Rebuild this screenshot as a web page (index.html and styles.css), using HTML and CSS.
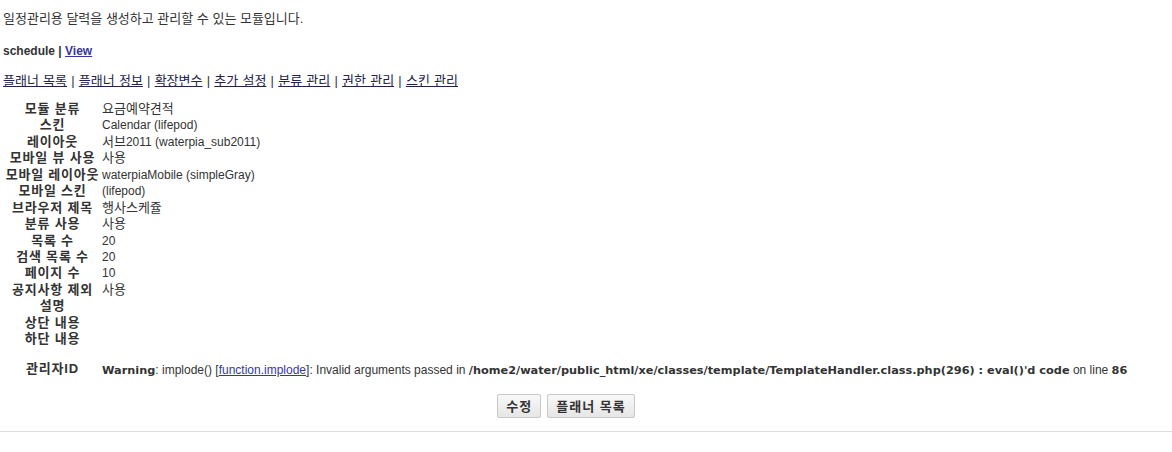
FILE: index.html
```html
<!DOCTYPE html>
<html lang="ko">
  <head>
    <meta charset="UTF-8" />
    <title>일정관리 모듈</title>
    <link rel="stylesheet" href="styles.css">
  </head>
  <body>
    <div class="content">
      <p class="intro ko">일정관리용 달력을 생성하고 관리할 수 있는 모듈입니다.</p>

      <p class="title">schedule | <a href="#">View</a></p>

      <p class="menu ko">
        <a href="#">플래너 목록</a> | <a href="#">플래너 정보</a> | <a href="#">확장변수</a> | <a href="#">추가 설정</a> | <a href="#">분류 관리</a> | <a href="#">권한 관리</a> | <a href="#">스킨 관리</a>
      </p>

      <table class="info">
        <tr><th>모듈 분류</th><td class="ko">요금예약견적</td></tr>
        <tr><th>스킨</th><td>Calendar (lifepod)</td></tr>
        <tr><th>레이아웃</th><td><span class="ko">서브</span>2011 (waterpia_sub2011)</td></tr>
        <tr><th>모바일 뷰 사용</th><td class="ko">사용</td></tr>
        <tr><th>모바일 레이아웃</th><td>waterpiaMobile (simpleGray)</td></tr>
        <tr><th>모바일 스킨</th><td>(lifepod)</td></tr>
        <tr><th>브라우저 제목</th><td class="ko">행사스케쥴</td></tr>
        <tr><th>분류 사용</th><td class="ko">사용</td></tr>
        <tr><th>목록 수</th><td>20</td></tr>
        <tr><th>검색 목록 수</th><td>20</td></tr>
        <tr><th>페이지 수</th><td>10</td></tr>
        <tr><th>공지사항 제외</th><td class="ko">사용</td></tr>
        <tr><th>설명</th><td></td></tr>
        <tr><th>상단 내용</th><td></td></tr>
        <tr><th>하단 내용</th><td></td></tr>
        <tr class="admin">
          <th>관리자ID</th>
          <td><br />
<b>Warning</b>:  implode() [<a href="#">function.implode</a>]: Invalid arguments passed in <b>/home2/water/public_html/xe/classes/template/TemplateHandler.class.php(296) : eval()'d code</b> on line <b>86</b></td>
        </tr>
      </table>

      <div class="buttons">
        <button type="button">수정</button>
        <button type="button">플래너 목록</button>
      </div>
    </div>
    <hr class="bottom" />
  </body>
</html>
```

FILE: styles.css
```css
body {
  margin: 0;
  background-color: #fff;
  font-family: "Liberation Sans", "Noto Sans CJK KR", sans-serif;
  font-size: 12px;
  color: #333;
}
.ko {
  font-size: 13px;
}
.content {
  padding: 11px 3px 0 3px;
}
p {
  margin: 0;
  line-height: 16px;
}
.intro {
  margin-bottom: 16px;
}
.title {
  font-weight: bold;
  margin-bottom: 14px;
}
.title a {
  color: #36369c;
}
.menu {
  margin-bottom: 12px;
  word-spacing: 0.6px;
}
.menu a {
  color: #22224a;
}
.info {
  border-collapse: collapse;
}
.info th,
.info td {
  padding: 0;
  line-height: 16.43px;
}
.info th {
  width: 99px;
  text-align: center;
  font-size: 13px;
  font-weight: bold;
  letter-spacing: 0.8px;
  white-space: nowrap;
}
.info td {
  text-align: left;
}
.info td a {
  color: #3636a0;
}
.info td b {
  font-family: "DejaVu Sans", sans-serif;
  font-size: 11.3px;
}
.info .admin th {
  vertical-align: bottom;
}
.info .admin td {
  line-height: 15px;
}
.buttons {
  padding: 16px 40px 0 0;
  display: flex;
  justify-content: center;
  gap: 6px;
}
.buttons button {
  height: 24px;
  padding: 0 8px;
  font-family: inherit;
  font-size: 13px;
  font-weight: bold;
  letter-spacing: 1px;
  color: #333;
  background: linear-gradient(#f8f8f8, #e6e6e6);
  border: 1px solid #c8c8c8;
  border-radius: 2px;
  cursor: pointer;
}
.bottom {
  margin: 13px 0 0 0;
  border: none;
  border-top: 1px solid #ddd;
}
```
